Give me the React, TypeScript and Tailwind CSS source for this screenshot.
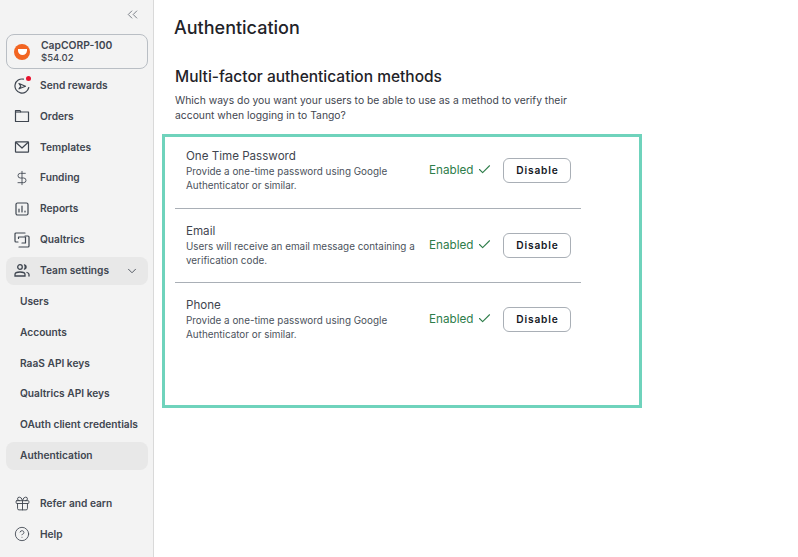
import { Check, ChevronDown, ChevronsLeft, CircleHelp, DollarSign, Gift } from "lucide-react";
import type { ReactNode } from "react";

const font = "font-['Inter','Noto_Sans',sans-serif]";

function SendIcon() {
  return (
    <svg width="16" height="16" viewBox="0 0 16 16" fill="none" stroke="#3f4650" strokeWidth="1.2" strokeLinecap="round" strokeLinejoin="round">
      <path d="M14.800 9.500A7 7 0 1 1 9.500 1.200" />
      <path d="M5 5.500l6.500 2.800L5 10.800M5 5.500l1.800 2.800-1.800 2.500" />
    </svg>
  );
}

function FolderIcon() {
  return (
    <svg width="16" height="16" viewBox="0 0 16 16" fill="none" stroke="#3f4650" strokeWidth="1.2" strokeLinejoin="round">
      <path d="M1.500 2.500h4.500l1 1.500h7.500v9.500h-13z" />
      <path d="M1.500 4h5.500" />
    </svg>
  );
}

function MailIcon() {
  return (
    <svg width="16" height="16" viewBox="0 0 16 16" fill="none" stroke="#3f4650" strokeWidth="1.2" strokeLinejoin="round">
      <rect x="1.500" y="2.800" width="13" height="10.400" rx="0.500" />
      <path d="M1.800 3.200L8 9l6.200-5.800" />
    </svg>
  );
}

function ReportsIcon() {
  return (
    <svg width="16" height="16" viewBox="0 0 16 16" fill="none" stroke="#3f4650" strokeWidth="1.2" strokeLinecap="round">
      <rect x="2" y="2" width="12" height="12" rx="1.500" />
      <path d="M5 11V8M8 11V5M11 11v-1" />
    </svg>
  );
}

function QualtricsIcon() {
  return (
    <svg width="16" height="16" viewBox="0 0 16 16" fill="none" stroke="#3f4650" strokeWidth="1.200" strokeLinejoin="round" strokeLinecap="round">
      <path d="M11 1H2a1 1 0 0 0-1 1v7a1 1 0 0 0 1 1h2" />
      <path d="M4.500 6.500V5h7v6H8" />
      <path d="M11 4h3a1 1 0 0 1 1 1v9a1 1 0 0 1-1 1H5" />
    </svg>
  );
}

function TeamIcon() {
  return (
    <svg width="16" height="16" viewBox="0 0 16 16" fill="none" stroke="#3f4650" strokeWidth="1.3" strokeLinecap="round">
      <circle cx="6" cy="4" r="2.300" />
      <path d="M10.500 1.800a2.300 2.300 0 0 1 0 4.400" fill="#3f4650" />
      <path d="M1 13v-1.500C1 10 3 9 6 9s5 1 5 2.500V13z" />
      <path d="M13 9.500c1.300.4 2 1 2 2V13" />
    </svg>
  );
}

function NavRow({ icon, label, active, trailing }: { icon?: ReactNode; label: string; active?: boolean; trailing?: ReactNode }) {
  return (
    <div className={`flex items-center rounded-lg text-[10.200px] font-semibold text-[#3f4650] ${active ? "my-[1.425px] h-[28px] bg-[#e8e8e8]" : "h-[30.850px]"} ${icon ? "" : "pl-[14px]"}`}>
      {icon && <span className="flex w-[34px] shrink-0 justify-center pr-[2px]">{icon}</span>}
      <span className="flex-1 whitespace-nowrap">{label}</span>
      {trailing}
    </div>
  );
}

const methods = [
  { title: "One Time Password", desc: "Provide a one-time password using Google Authenticator or similar." },
  { title: "Email", desc: "Users will receive an email message containing a verification code." },
  { title: "Phone", desc: "Provide a one-time password using Google Authenticator or similar." },
];

export default function App() {
  return (
    <div className={`flex h-[557px] w-[798px] overflow-hidden bg-white ${font}`}>
      <aside className="flex h-full w-[154px] shrink-0 flex-col border-r border-[#d9d9d9] bg-[#f3f3f3] pl-[6px] pr-[5px]">
        <div className="flex h-[34px] items-center justify-end pb-[6px] pr-[7px]">
          <ChevronsLeft size={17} strokeWidth={1} color="#4b525c" />
        </div>
        <div className="mb-[1.200px] flex h-[35px] items-center rounded-lg border border-[#b9bec4] pl-[7px]">
          <span className="flex h-4 w-4 items-center justify-center rounded-full bg-[#f26522]">
            <span className="h-[6px] w-[9px] rounded-b-full bg-white" />
          </span>
          <div className="ml-[11px] -mt-px leading-none">
            <div className="text-[10.300px] font-semibold leading-[13px] text-[#3f4650]">CapCORP-100</div>
            <div className="text-[9.500px] font-medium leading-[11px] text-[#3f4650]">$54.02</div>
          </div>
        </div>
        <NavRow
          label="Send rewards"
          icon={
            <span className="relative flex">
              <SendIcon />
              <span className="absolute right-[-1px] top-[-2px] h-[5px] w-[5px] rounded-full bg-[#e8112d]" />
            </span>
          }
        />
        <NavRow label="Orders" icon={<FolderIcon />} />
        <NavRow label="Templates" icon={<MailIcon />} />
        <NavRow label="Funding" icon={<DollarSign size={16} strokeWidth={1.300} color="#3f4650" />} />
        <NavRow label="Reports" icon={<ReportsIcon />} />
        <NavRow label="Qualtrics" icon={<QualtricsIcon />} />
        <NavRow
          label="Team settings"
          active
          icon={<TeamIcon />}
          trailing={<ChevronDown size={14} strokeWidth={1.500} color="#3f4650" className="mr-[9px]" />}
        />
        <NavRow label="Users" />
        <NavRow label="Accounts" />
        <NavRow label="RaaS API keys" />
        <NavRow label="Qualtrics API keys" />
        <NavRow label="OAuth client credentials" />
        <NavRow label="Authentication" active />
        <div className="mt-[17px]">
          <NavRow label="Refer and earn" icon={<Gift size={17} strokeWidth={1.300} color="#3f4650" />} />
          <NavRow label="Help" icon={<CircleHelp size={16} strokeWidth={1.300} color="#3f4650" />} />
        </div>
      </aside>

      <main className="flex-1 pl-[8px]">
        <h1 className="ml-[12px] mt-[17px] text-[18px] font-medium leading-[22px] text-[#1f2329]">Authentication</h1>
        <h2 className="ml-[13px] mt-[28px] text-[15.500px] font-medium leading-[20px] text-[#1f2329]">Multi-factor authentication methods</h2>
        <p className="ml-[13px] mt-[6px] w-[420px] text-[10.350px] leading-[14.500px] text-[#3f4650]">
          Which ways do you want your users to be able to use as a method to verify their account when logging in to Tango?
        </p>
        <div className="mt-[12px] h-[274px] w-[480px] border-[3px] border-[#6fd3bc] pl-[10px]">
          {methods.map((m, i) => (
            <div
              key={m.title}
              className={`flex w-[406px] items-start pl-[11px] ${i === 0 ? "h-[72px] border-b border-[#a9afb6] pt-[12px]" : i === 1 ? "h-[74px] border-b border-[#a9afb6] pt-[15px]" : "h-[74px] pt-[15px]"}`}
            >
              <div className="w-[232px] shrink-0">
                <div className="text-[11.600px] leading-[14px] text-[#3f4650]">{m.title}</div>
                <div className="mt-[0.500px] text-[9.900px] leading-[14.500px] text-[#4b525c]">{m.desc}</div>
              </div>
              <div className="ml-[11px] mt-[13px] flex items-center text-[11.700px] leading-[14px] text-[#2e7d4a]">
                Enabled
                <Check size={15} strokeWidth={1.700} className="ml-[4px]" />
              </div>
              <button className="ml-[11px] mt-[9px] h-[25px] w-[68px] shrink-0 rounded-md border border-[#a9afb6] bg-white text-[10.200px] font-semibold tracking-[0.080em] text-[#14181f]">
                Disable
              </button>
            </div>
          ))}
        </div>
      </main>
    </div>
  );
}
